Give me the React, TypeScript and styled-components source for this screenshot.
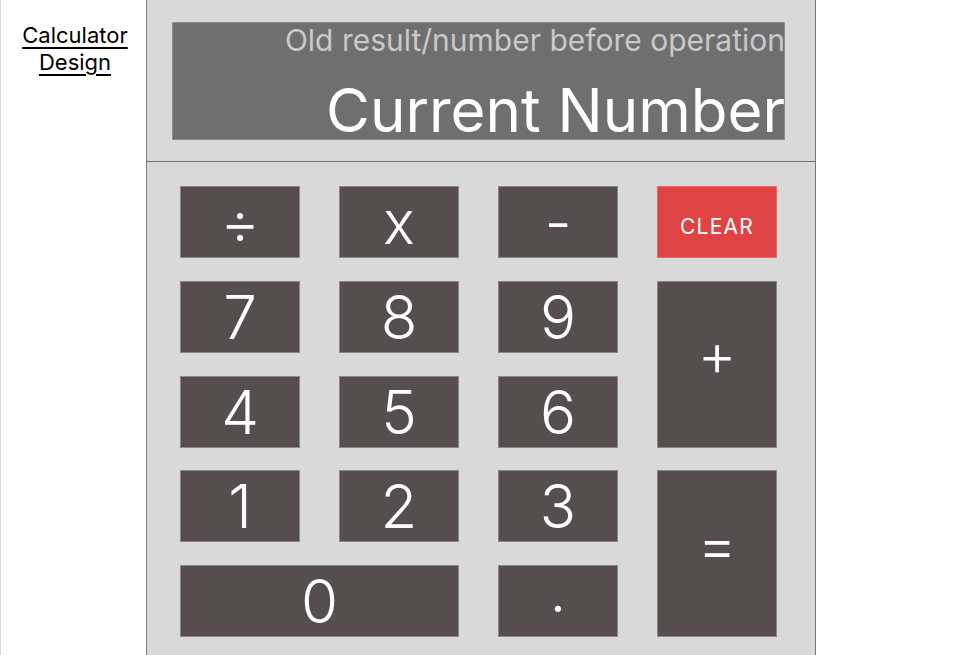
import styled, { createGlobalStyle } from "styled-components";

const GlobalStyle = createGlobalStyle`
  html, body {
    margin: 0;
    padding: 0;
    background: #ffffff;
  }

  body {
    font-family: Inter, "Noto Sans", "Liberation Sans", sans-serif;
  }
`;

const Page = styled.div`
  display: flex;
  height: 100vh;
  border-left: 1px solid #dcdcdc;
  box-sizing: border-box;
  overflow: hidden;
`;

const Sidebar = styled.div`
  width: 145px;
  flex-shrink: 0;
  padding: 22px 0 0 3px;
  box-sizing: border-box;
  text-align: center;
`;

const Label = styled.div`
  font-size: 22px;
  font-weight: 400;
  line-height: 27px;
  color: #000;
  text-decoration: underline;
  text-underline-offset: 4px;
  text-decoration-thickness: 1.5px;
`;

const Calculator = styled.div`
  width: 670px;
  height: 100%;
  flex-shrink: 0;
  background: #d9d9d9;
  border-left: 1px solid #777;
  border-right: 1px solid #777;
  box-sizing: border-box;
  display: flex;
  flex-direction: column;
`;

const DisplayArea = styled.div`
  height: 162px;
  padding: 22px 30px 0 25px;
  box-sizing: border-box;
  border-bottom: 1px solid #6e6e6e;
`;

const Screen = styled.div`
  height: 118px;
  background: #6f6f6f;
  border: 1px solid #8e8e8e;
  box-sizing: border-box;
  display: flex;
  flex-direction: column;
  align-items: flex-end;
  overflow: visible;
`;

const PreviousValue = styled.div`
  font-size: 30px;
  font-weight: 400;
  line-height: 30px;
  margin-top: 2px;
  margin-right: -1px;
  color: #c9c9c9;
  white-space: nowrap;
`;

const CurrentValue = styled.div`
  font-size: 60px;
  font-weight: 400;
  line-height: 60px;
  margin-top: 25px;
  margin-right: -1px;
  color: #ffffff;
  white-space: nowrap;
`;

const Keypad = styled.div`
  display: grid;
  grid-template-columns: repeat(4, 120px);
  grid-auto-rows: 72px;
  justify-content: space-between;
  row-gap: 22.75px;
  padding: 24px 38px 0 33px;
`;

const Key = styled.button<{
  $danger?: boolean;
  $col?: string;
  $row?: string;
  $small?: boolean;
  $raise?: number;
}>`
  grid-column: ${(p) => p.$col ?? "auto"};
  grid-row: ${(p) => p.$row ?? "auto"};
  margin: 0;
  padding: ${(p) => (p.$small ? "9px 0 0" : `0 0 ${(p.$raise ?? 0) * 2}px`)};
  background: ${(p) => (p.$danger ? "#e04343" : "#564e4e")};
  border: 1px solid ${(p) => (p.$danger ? "#e86a6a" : "#8c8686")};
  color: #ffffff;
  font-family: Inter, "Noto Sans", "Liberation Sans", sans-serif;
  font-size: ${(p) => (p.$small ? "21px" : "60px")};
  font-weight: ${(p) => (p.$small ? 400 : 300)};
  letter-spacing: ${(p) => (p.$small ? "1.2px" : "0")};
  line-height: 1;
  display: flex;
  align-items: center;
  justify-content: center;
  cursor: pointer;
`;

export default function App() {
  return (
    <>
      <GlobalStyle />
      <Page>
        <Sidebar>
          <Label>Calculator</Label>
          <Label>Design</Label>
        </Sidebar>
        <Calculator>
          <DisplayArea>
            <Screen>
              <PreviousValue>Old result/number before operation</PreviousValue>
              <CurrentValue>Current Number</CurrentValue>
            </Screen>
          </DisplayArea>
          <Keypad>
            <Key>÷</Key>
            <Key>x</Key>
            <Key>-</Key>
            <Key $danger $small>
              CLEAR
            </Key>
            <Key>7</Key>
            <Key>8</Key>
            <Key>9</Key>
            <Key $col="4" $row="2 / span 2" $raise={10}>
              +
            </Key>
            <Key>4</Key>
            <Key>5</Key>
            <Key>6</Key>
            <Key>1</Key>
            <Key>2</Key>
            <Key>3</Key>
            <Key $col="4" $row="4 / span 2" $raise={10}>
              =
            </Key>
            <Key $col="1 / span 2">0</Key>
            <Key $raise={11}>.</Key>
          </Keypad>
        </Calculator>
      </Page>
    </>
  );
}
